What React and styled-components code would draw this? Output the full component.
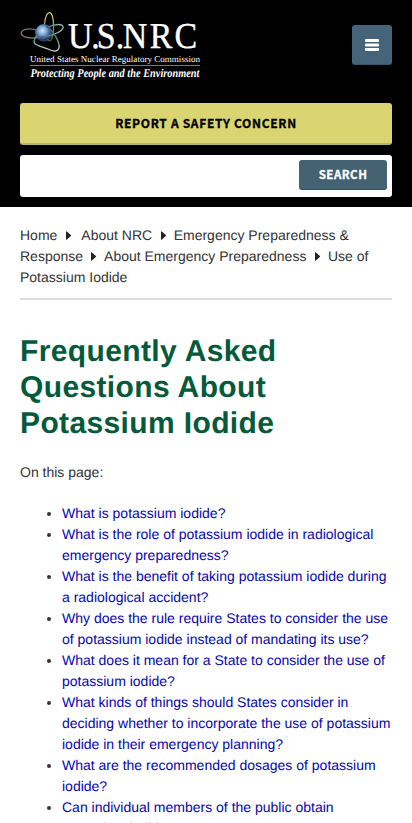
import React from "react";
import styled, { createGlobalStyle } from "styled-components";

const GlobalStyle = createGlobalStyle`
  *, *::before, *::after { box-sizing: border-box; }
  html, body { margin: 0; background: #fff; }
  body {
    height: 823px;
    overflow: hidden;
    color: #333;
    font: 14px/21px "Liberation Sans", Arial, sans-serif;
    text-rendering: geometricPrecision;
  }
`;

const Page = styled.div`
  height: 823px;
  overflow: hidden;
`;

const Header = styled.header`
  display: flex;
  flex-direction: column;
  height: 207px;
  padding: 10px 20px;
  background: #000;
`;

const Brand = styled.div`
  display: flex;
  justify-content: space-between;
  height: 93px;
`;

const LogoLink = styled.a`
  display: block;
  width: 184px;
  height: 76px;
  svg { display: block; overflow: visible; }
`;

const MenuButton = styled.button`
  display: flex;
  align-items: center;
  justify-content: center;
  width: 40px;
  height: 40px;
  margin: 15px 0 0;
  padding: 0;
  border: 0;
  border-bottom: 1px solid #395468;
  border-radius: 3px;
  background: #45647a;
`;

const buttonFont = `"Noto Sans CJK SC", "Noto Sans", sans-serif`;

const SafetyButton = styled.button`
  height: 42px;
  margin: 0;
  padding: 0;
  border: 0;
  border-bottom: 2px solid #b9b56a;
  border-radius: 3px;
  background: #dad570;
  color: #000;
  font: 700 12px/20px ${buttonFont};
  letter-spacing: 0.68px;
  -webkit-text-stroke: 0.3px #000;
`;

const SearchForm = styled.form`
  display: flex;
  height: 42px;
  margin-top: 10px;
  padding: 5px;
  border-radius: 3px;
  background: #fff;
`;

const SearchInput = styled.input`
  flex: 1;
  min-width: 0;
  border: 0;
  background: transparent;
  outline: 0;
`;

const SearchButton = styled.button`
  width: 88px;
  height: 30px;
  padding: 0 0 1px;
  border: 0;
  border-bottom: 1px solid #35515f;
  border-radius: 3px;
  background: #446272;
  color: #fff;
  font: 700 11.5px/18px ${buttonFont};
  letter-spacing: 0.5px;
  -webkit-text-stroke: 0.3px #fff;
`;

const Content = styled.main`
  padding: 18px 20px 0;
`;

const Breadcrumb = styled.nav`
  height: 75px;
  padding-bottom: 10px;
  border-bottom: 2px solid #ddd;
`;

const Arrow = styled.svg`
  display: inline-block;
  width: 6px;
  height: 9px;
  margin: 0 ${(p) => p.$after}px 0 ${(p) => p.$before}px;
  vertical-align: 0;
  fill: #222;
`;

const Title = styled.h1`
  margin: 34px 0 20px;
  color: #055a3c;
  font-size: 30px;
  line-height: 36px;
  letter-spacing: 0.37px;
`;

const Intro = styled.p`
  margin: 0;
`;

const Questions = styled.ul`
  margin: 20px 0 0;
  padding-left: 42px;
`;

const Question = styled.li`
  a { color: #0606ae; text-decoration: none; }
`;

const questions = [
  ["What is potassium iodide?"],
  ["What is the role of potassium iodide in radiological", "emergency preparedness?"],
  ["What is the benefit of taking potassium iodide during", "a radiological accident?"],
  ["Why does the rule require States to consider the use", "of potassium iodide instead of mandating its use?"],
  ["What does it mean for a State to consider the use of", "potassium iodide?"],
  ["What kinds of things should States consider in", "deciding whether to incorporate the use of potassium", "iodide in their emergency planning?"],
  ["What are the recommended dosages of potassium", "iodide?"],
  ["Can individual members of the public obtain", "potassium iodide?"],
];

function Separator({ before, after }) {
  return (
    <Arrow $before={before} $after={after} viewBox="0 0 6 9" aria-hidden="true">
      <path d="M0 .8Q0-.1.9.5L4.8 4Q5.3 4.5 4.8 5L.9 8.5Q0 9.1 0 8.2Z" />
    </Arrow>
  );
}

function Logo() {
  return (
    <svg width="184" height="76" viewBox="20 10 184 76" role="img" aria-label="U.S.NRC">
      <defs>
        <radialGradient id="nucleus" cx="42%" cy="38%">
          <stop offset="0" stopColor="#d5e8fa" />
          <stop offset=".5" stopColor="#7ca4d3" />
          <stop offset="1" stopColor="#233f74" />
        </radialGradient>
        <linearGradient id="gold" x2="0" y2="1">
          <stop offset="0" stopColor="#e2d285" />
          <stop offset="1" stopColor="#65541d" />
        </linearGradient>
        <linearGradient id="side">
          <stop offset="0" stopColor="#97736f" />
          <stop offset=".5" stopColor="#456780" />
          <stop offset="1" stopColor="#9ec7bb" />
        </linearGradient>
        <linearGradient id="sweep" x2="0" y2="1">
          <stop offset="0" stopColor="#34565e" />
          <stop offset=".55" stopColor="#5d9c93" />
          <stop offset="1" stopColor="#d8e8d2" />
        </linearGradient>
      </defs>
      <circle cx="43.8" cy="32.8" r="8.7" fill="url(#nucleus)" />
      <g fill="none" strokeWidth="1.3">
        <path d="M44.5 24C46 9.5 53 8 53.5 24C54 39 50 44 47.5 39" stroke="url(#gold)" />
        <path d="M37 30C22 26 17 34 25 37C36 40 60 35 63 28C64 23 55 24 48 27" stroke="url(#side)" />
        <path d="M37 35C29 46 39 45 48 49C58 54 62 49 57 39C54 33 49 28 46 26" stroke="url(#sweep)" />
      </g>
      <g fill="#fff" fontFamily="'Liberation Serif', serif">
        <text x="73.1 98 104 124.5 132 161 187.5" y="47.5" fontSize="36.5" stroke="#fff" strokeWidth=".4" transform="scale(.93 1)">U.S.NRC</text>
        <text x="30" y="61.5" fontSize="9" textLength="170" lengthAdjust="spacing">United States Nuclear Regulatory Commission</text>
        <text x="30.5" y="77" fontSize="12" fontStyle="italic" fontWeight="700" textLength="169" lengthAdjust="spacingAndGlyphs">Protecting People and the Environment</text>
      </g>
      <path d="M30 65.5H200" stroke="#777" strokeWidth="1" />
    </svg>
  );
}

export default function App() {
  return (
    <Page>
      <GlobalStyle />
      <Header>
        <Brand>
          <LogoLink><Logo /></LogoLink>
          <MenuButton aria-label="Menu">
            <svg width="14" height="12" viewBox="0 0 14 12" fill="#fff">
              <rect width="14" height="3" rx="1" />
              <rect y="4.5" width="14" height="3" rx="1" />
              <rect y="9" width="14" height="3" rx="1" />
            </svg>
          </MenuButton>
        </Brand>
        <SafetyButton>REPORT A SAFETY CONCERN</SafetyButton>
        <SearchForm>
          <SearchInput aria-label="Search" />
          <SearchButton type="button">SEARCH</SearchButton>
        </SearchForm>
      </Header>
      <Content>
        <Breadcrumb>
          Home<Separator before={9} after={9} />About NRC<Separator before={8.5} after={7} />Emergency Preparedness &amp;<br />
          Response<Separator before={8} after={7} />About Emergency Preparedness<Separator before={8.5} after={7} />Use of<br />
          Potassium Iodide
        </Breadcrumb>
        <Title>Frequently Asked<br />Questions About<br />Potassium Iodide</Title>
        <Intro>On this page:</Intro>
        <Questions>
          {questions.map((lines) => (
            <Question key={lines[0]}>
              <a>
                {lines.map((line, i) => (
                  <React.Fragment key={line}>{i > 0 && <br />}{line}</React.Fragment>
                ))}
              </a>
            </Question>
          ))}
        </Questions>
      </Content>
    </Page>
  );
}
